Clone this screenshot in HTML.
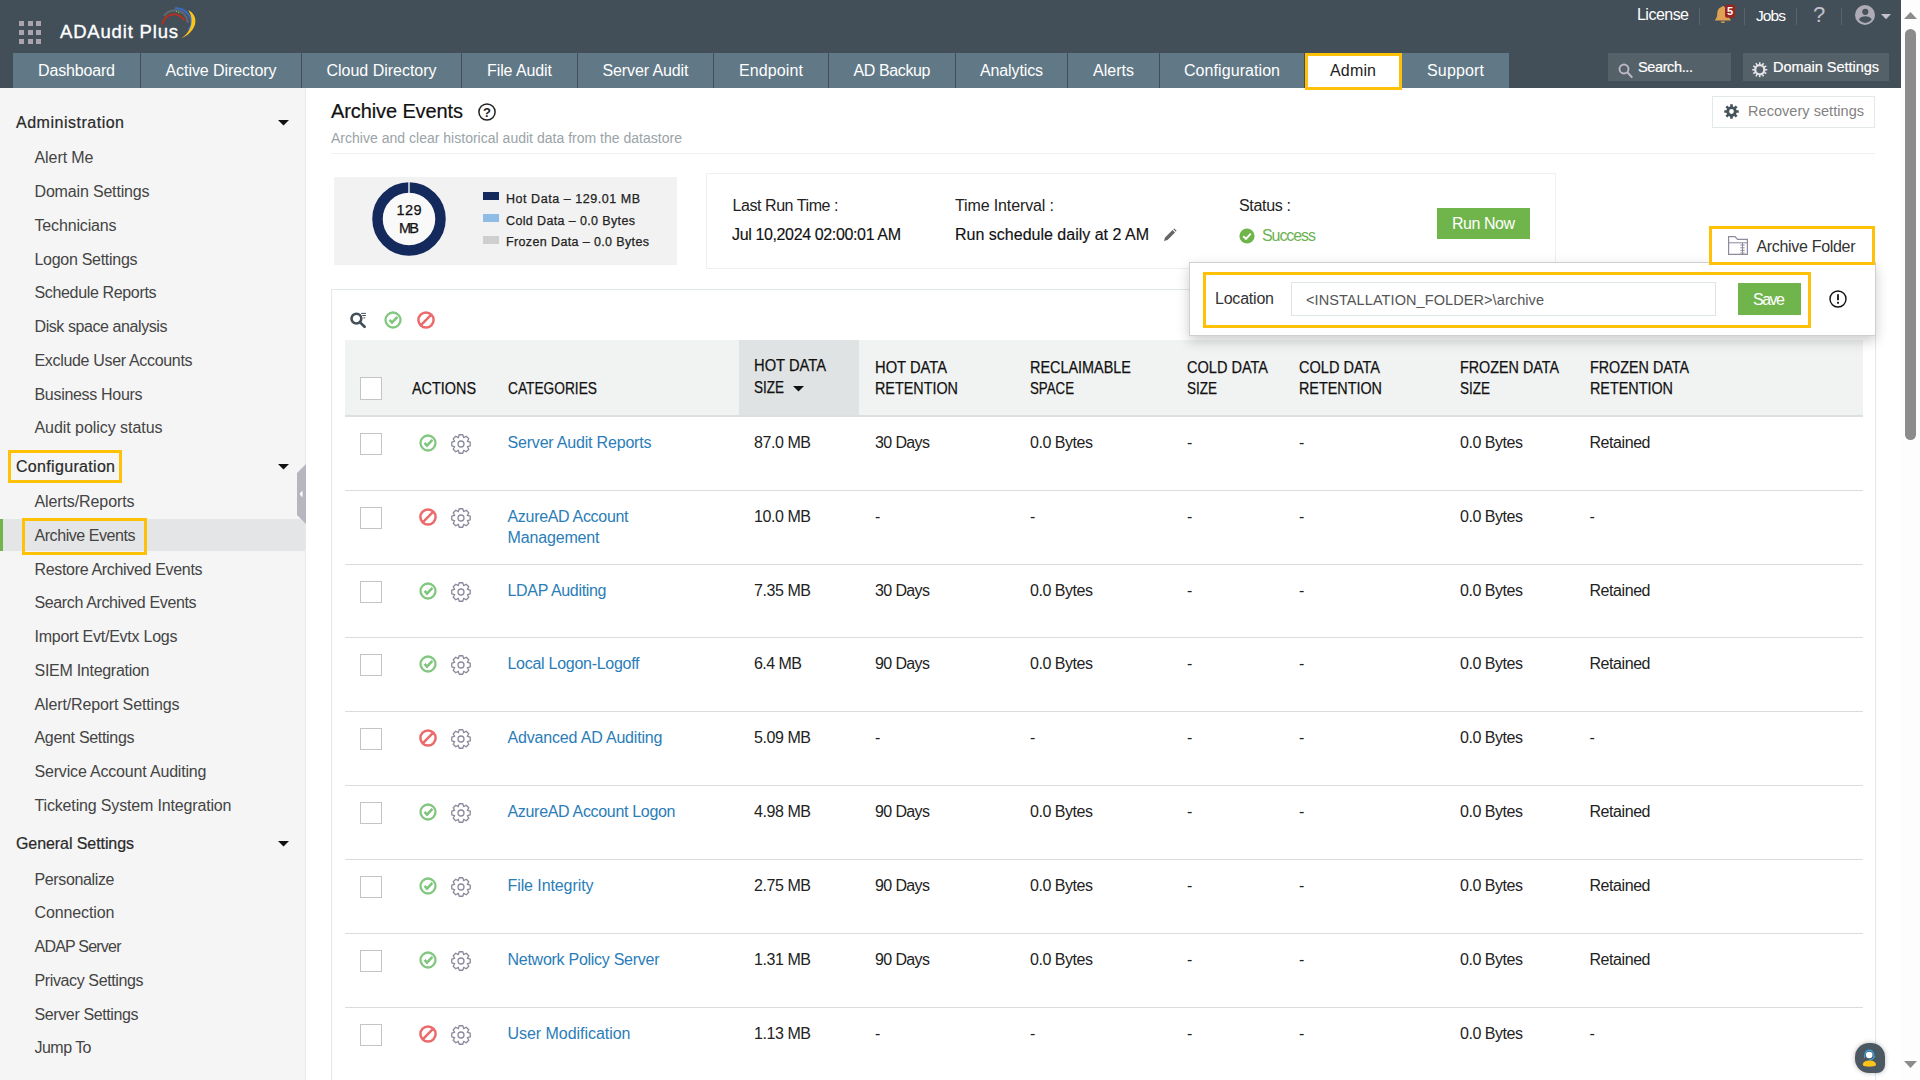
<!DOCTYPE html>
<html><head><meta charset="utf-8"><title>ADAudit Plus</title>
<style>
html,body{margin:0;padding:0;}
body{width:1920px;height:1080px;overflow:hidden;position:relative;background:#fff;font-family:"Liberation Sans",sans-serif;}
.t{position:absolute;white-space:nowrap;}
.r{position:absolute;box-sizing:border-box;}
svg{position:absolute;overflow:visible;}
</style></head><body>
<div class="r" style="left:1901px;top:0px;width:19px;height:1080px;background:#fdfdfd;"></div>
<div class="r" style="left:1905px;top:29px;width:11px;height:411px;background:#8b8b8b;border-radius:5.5px;"></div>
<svg style="left:1904px;top:12px" width="13" height="7"><path d="M0 7 L6.5 0 L13 7Z" fill="#8b8b8b"/></svg>
<svg style="left:1904px;top:1061px" width="13" height="7"><path d="M0 0 L6.5 7 L13 0Z" fill="#8b8b8b"/></svg>
<div class="r" style="left:0px;top:0px;width:1901px;height:88px;background:#424f58;"></div>
<div class="r" style="left:19px;top:21px;width:5px;height:4.6px;background:#a9a4ad;"></div>
<div class="r" style="left:19px;top:30.2px;width:5px;height:4.6px;background:#a9a4ad;"></div>
<div class="r" style="left:19px;top:39.4px;width:5px;height:4.6px;background:#a9a4ad;"></div>
<div class="r" style="left:27.5px;top:21px;width:5px;height:4.6px;background:#a9a4ad;"></div>
<div class="r" style="left:27.5px;top:30.2px;width:5px;height:4.6px;background:#a9a4ad;"></div>
<div class="r" style="left:27.5px;top:39.4px;width:5px;height:4.6px;background:#a9a4ad;"></div>
<div class="r" style="left:36px;top:21px;width:5px;height:4.6px;background:#a9a4ad;"></div>
<div class="r" style="left:36px;top:30.2px;width:5px;height:4.6px;background:#a9a4ad;"></div>
<div class="r" style="left:36px;top:39.4px;width:5px;height:4.6px;background:#a9a4ad;"></div>
<div class="t " style="left:60px;top:19.2px;font-size:18.5px;line-height:26px;color:#fff;letter-spacing:0.818px;-webkit-text-stroke:0.35px #fff;">ADAudit Plus</div>
<svg style="left:160px;top:6px" width="40" height="36" viewBox="0 0 40 36">
<path d="M3.9 9.7 C9 4 17 2.5 23 7 C26 9.5 27.5 13 27.7 16.7" fill="none" stroke="#5f6a70" stroke-width="2.2"/>
<path d="M15 2.3 C22 1.5 28 6 30.5 12 C32.5 17 31 21 28.4 23.6" fill="none" stroke="#3a6cc4" stroke-width="2"/>
<path d="M28 4 C38 8 40 24 20.8 32.7 C33 25 34 12 28 4Z" fill="#fcc419"/>
<path d="M2.3 18.5 C4 9 16 3.5 24.7 14.4" fill="none" stroke="#b5301f" stroke-width="2"/>
<circle cx="16.5" cy="5.5" r="0.6" fill="#7bd04a"/><circle cx="18.5" cy="6.6" r="0.6" fill="#7bd04a"/>
</svg>
<div class="r" style="left:13px;top:53px;width:127px;height:35px;background:#617987;"></div>
<div class="t " style="left:38px;top:60.1px;font-size:16px;line-height:22px;color:#fff;letter-spacing:-0.159px;">Dashboard</div>
<div class="r" style="left:141px;top:53px;width:160px;height:35px;background:#617987;"></div>
<div class="t " style="left:165.5px;top:60.1px;font-size:16px;line-height:22px;color:#fff;letter-spacing:-0.068px;">Active Directory</div>
<div class="r" style="left:302px;top:53px;width:159px;height:35px;background:#617987;"></div>
<div class="t " style="left:326.5px;top:60.1px;font-size:16px;line-height:22px;color:#fff;letter-spacing:-0.018px;">Cloud Directory</div>
<div class="r" style="left:462px;top:53px;width:115px;height:35px;background:#617987;"></div>
<div class="t " style="left:487px;top:60.1px;font-size:16px;line-height:22px;color:#fff;letter-spacing:-0.090px;">File Audit</div>
<div class="r" style="left:578px;top:53px;width:135px;height:35px;background:#617987;"></div>
<div class="t " style="left:602.5px;top:60.1px;font-size:16px;line-height:22px;color:#fff;letter-spacing:-0.105px;">Server Audit</div>
<div class="r" style="left:714px;top:53px;width:114px;height:35px;background:#617987;"></div>
<div class="t " style="left:739px;top:60.1px;font-size:16px;line-height:22px;color:#fff;letter-spacing:0.119px;">Endpoint</div>
<div class="r" style="left:829px;top:53px;width:126px;height:35px;background:#617987;"></div>
<div class="t " style="left:853.5px;top:60.1px;font-size:16px;line-height:22px;color:#fff;letter-spacing:-0.380px;">AD Backup</div>
<div class="r" style="left:956px;top:53px;width:111px;height:35px;background:#617987;"></div>
<div class="t " style="left:980px;top:60.1px;font-size:16px;line-height:22px;color:#fff;letter-spacing:-0.128px;">Analytics</div>
<div class="r" style="left:1068px;top:53px;width:91px;height:35px;background:#617987;"></div>
<div class="t " style="left:1093px;top:60.1px;font-size:16px;line-height:22px;color:#fff;letter-spacing:0.020px;">Alerts</div>
<div class="r" style="left:1160px;top:53px;width:144px;height:35px;background:#617987;"></div>
<div class="t " style="left:1184px;top:60.1px;font-size:16px;line-height:22px;color:#fff;letter-spacing:0.069px;">Configuration</div>
<div class="r" style="left:1304.5px;top:53px;width:97px;height:36.5px;background:#fff;border:3.5px solid #ffc107;"></div>
<div class="t " style="left:1330px;top:60.1px;font-size:16px;line-height:22px;color:#222;letter-spacing:0.162px;">Admin</div>
<div class="r" style="left:1402px;top:53px;width:107px;height:35px;background:#617987;"></div>
<div class="t " style="left:1427px;top:60.1px;font-size:16px;line-height:22px;color:#fff;letter-spacing:0.160px;">Support</div>
<div class="t " style="left:1637px;top:3.8px;font-size:16px;line-height:22px;color:#fff;letter-spacing:-0.525px;">License</div>
<div class="r" style="left:1699px;top:8px;width:1px;height:17px;background:#58646c;"></div>
<svg style="left:1714px;top:4px" width="22" height="21" viewBox="0 0 22 21">
<path d="M7.6 3 C8 1.6 10 1.6 10.4 3 C13.6 3.8 14.4 6.8 14.6 10.3 C14.8 13.2 15.6 14.6 17 16.4 L0.8 16.4 C2.2 14.6 3 13.2 3.2 10.3 C3.4 6.8 4.2 3.8 7.6 3Z" fill="#dea252"/>
<path d="M6.6 17.4 A2.4 2.4 0 0 0 11.2 17.4Z" fill="#dea252"/>
<rect x="11" y="0.7" width="10" height="13" rx="2.2" fill="#9b2320"/>
<text x="16" y="10.8" font-size="11" font-weight="bold" fill="#fff" text-anchor="middle" font-family="Liberation Sans, sans-serif">5</text>
</svg>
<div class="r" style="left:1744px;top:8px;width:1px;height:17px;background:#58646c;"></div>
<div class="t " style="left:1756px;top:5px;font-size:15.5px;line-height:22px;color:#fff;letter-spacing:-0.913px;">Jobs</div>
<div class="r" style="left:1796px;top:8px;width:1px;height:17px;background:#58646c;"></div>
<div class="t " style="left:1813px;top:-1px;font-size:22px;line-height:31px;color:#c3c0cb;">?</div>
<div class="r" style="left:1841px;top:8px;width:1px;height:17px;background:#58646c;"></div>
<svg style="left:1855px;top:5px" width="20" height="20" viewBox="0 0 20 20">
<circle cx="10" cy="10" r="10" fill="#aeabb6"/>
<circle cx="10.3" cy="6.8" r="3.1" fill="#46525c"/>
<path d="M3.9 14.6 C6 10.2 14.6 10.2 16.7 14.6 C14.8 17 12.6 17.9 10.3 17.9 C8 17.9 5.8 17 3.9 14.6Z" fill="#46525c"/>
</svg>
<svg style="left:1881px;top:13.8px" width="10" height="6"><path d="M0 0 L5 5.2 L10 0Z" fill="#c4c1cd"/></svg>
<div class="r" style="left:1608px;top:53px;width:123px;height:28px;background:#556169;"></div>
<svg style="left:1618px;top:63px" width="16" height="16" viewBox="0 0 16 16"><circle cx="6" cy="6" r="4.5" fill="none" stroke="#bcb9c4" stroke-width="1.9"/><path d="M9.3 9.3 L14.3 14.6" stroke="#bcb9c4" stroke-width="2.1" /></svg>
<div class="t " style="left:1638px;top:56.5px;font-size:14.5px;line-height:20px;color:#fff;letter-spacing:-0.379px;-webkit-text-stroke:0.20px #fff;">Search...</div>
<div class="r" style="left:1743px;top:53px;width:146px;height:28px;background:#556169;"></div>
<svg style="left:1751.8px;top:62.2px" width="15.5" height="15.5" viewBox="0 0 17 17"><circle cx="8.5" cy="8.5" r="5" fill="none" stroke="#e4e2e8" stroke-width="2.5"/><path d="M8.50 2.90 L8.50 0.20 M11.30 3.65 L12.65 1.31 M13.35 5.70 L15.69 4.35 M14.10 8.50 L16.80 8.50 M13.35 11.30 L15.69 12.65 M11.30 13.35 L12.65 15.69 M8.50 14.10 L8.50 16.80 M5.70 13.35 L4.35 15.69 M3.65 11.30 L1.31 12.65 M2.90 8.50 L0.20 8.50 M3.65 5.70 L1.31 4.35 M5.70 3.65 L4.35 1.31 " stroke="#e4e2e8" stroke-width="1.7"/></svg>
<div class="t " style="left:1773px;top:56.5px;font-size:14.5px;line-height:20px;color:#fff;letter-spacing:-0.028px;-webkit-text-stroke:0.20px #fff;">Domain Settings</div>
<div class="r" style="left:0px;top:88px;width:306px;height:992px;background:#f5f5f5;border-right:1px solid #e9e9e9;"></div>
<div class="r" style="left:0px;top:519px;width:305px;height:31.5px;background:#e4e5e6;"></div>
<div class="r" style="left:0px;top:519px;width:3px;height:31.5px;background:#70b54c;"></div>
<div class="t " style="left:16px;top:111.6px;font-size:16px;line-height:22px;color:#2a2a2a;letter-spacing:0.510px;-webkit-text-stroke:0.22px #2a2a2a;">Administration</div>
<svg style="left:278px;top:119.5px" width="11" height="6"><path d="M0 0 L5.5 5.5 L11 0Z" fill="#111"/></svg>
<div class="t " style="left:16px;top:455.6px;font-size:16px;line-height:22px;color:#2a2a2a;letter-spacing:0.319px;-webkit-text-stroke:0.22px #2a2a2a;">Configuration</div>
<svg style="left:278px;top:463.5px" width="11" height="6"><path d="M0 0 L5.5 5.5 L11 0Z" fill="#111"/></svg>
<div class="t " style="left:16px;top:832.6px;font-size:16px;line-height:22px;color:#2a2a2a;letter-spacing:-0.079px;-webkit-text-stroke:0.22px #2a2a2a;">General Settings</div>
<svg style="left:278px;top:840.5px" width="11" height="6"><path d="M0 0 L5.5 5.5 L11 0Z" fill="#111"/></svg>
<div class="t " style="left:34.5px;top:146.6px;font-size:16px;line-height:22px;color:#444;letter-spacing:-0.081px;">Alert Me</div>
<div class="t " style="left:34.5px;top:180.6px;font-size:16px;line-height:22px;color:#444;letter-spacing:-0.171px;">Domain Settings</div>
<div class="t " style="left:34.5px;top:214.6px;font-size:16px;line-height:22px;color:#444;letter-spacing:-0.160px;">Technicians</div>
<div class="t " style="left:34.5px;top:248.6px;font-size:16px;line-height:22px;color:#444;letter-spacing:-0.288px;">Logon Settings</div>
<div class="t " style="left:34.5px;top:281.6px;font-size:16px;line-height:22px;color:#444;letter-spacing:-0.346px;">Schedule Reports</div>
<div class="t " style="left:34.5px;top:315.6px;font-size:16px;line-height:22px;color:#444;letter-spacing:-0.417px;">Disk space analysis</div>
<div class="t " style="left:34.5px;top:349.6px;font-size:16px;line-height:22px;color:#444;letter-spacing:-0.326px;">Exclude User Accounts</div>
<div class="t " style="left:34.5px;top:383.6px;font-size:16px;line-height:22px;color:#444;letter-spacing:-0.311px;">Business Hours</div>
<div class="t " style="left:34.5px;top:416.6px;font-size:16px;line-height:22px;color:#444;letter-spacing:-0.053px;">Audit policy status</div>
<div class="t " style="left:34.5px;top:490.6px;font-size:16px;line-height:22px;color:#444;letter-spacing:-0.105px;">Alerts/Reports</div>
<div class="t " style="left:34.5px;top:524.6px;font-size:16px;line-height:22px;color:#444;letter-spacing:-0.439px;">Archive Events</div>
<div class="t " style="left:34.5px;top:558.6px;font-size:16px;line-height:22px;color:#444;letter-spacing:-0.327px;">Restore Archived Events</div>
<div class="t " style="left:34.5px;top:591.6px;font-size:16px;line-height:22px;color:#444;letter-spacing:-0.375px;">Search Archived Events</div>
<div class="t " style="left:34.5px;top:625.6px;font-size:16px;line-height:22px;color:#444;letter-spacing:-0.243px;">Import Evt/Evtx Logs</div>
<div class="t " style="left:34.5px;top:659.6px;font-size:16px;line-height:22px;color:#444;letter-spacing:-0.278px;">SIEM Integration</div>
<div class="t " style="left:34.5px;top:693.6px;font-size:16px;line-height:22px;color:#444;letter-spacing:-0.131px;">Alert/Report Settings</div>
<div class="t " style="left:34.5px;top:726.6px;font-size:16px;line-height:22px;color:#444;letter-spacing:-0.313px;">Agent Settings</div>
<div class="t " style="left:34.5px;top:760.6px;font-size:16px;line-height:22px;color:#444;letter-spacing:-0.179px;">Service Account Auditing</div>
<div class="t " style="left:34.5px;top:794.6px;font-size:16px;line-height:22px;color:#444;letter-spacing:-0.158px;">Ticketing System Integration</div>
<div class="t " style="left:34.5px;top:868.6px;font-size:16px;line-height:22px;color:#444;letter-spacing:-0.360px;">Personalize</div>
<div class="t " style="left:34.5px;top:901.6px;font-size:16px;line-height:22px;color:#444;letter-spacing:-0.105px;">Connection</div>
<div class="t " style="left:34.5px;top:935.6px;font-size:16px;line-height:22px;color:#444;letter-spacing:-0.785px;">ADAP Server</div>
<div class="t " style="left:34.5px;top:969.6px;font-size:16px;line-height:22px;color:#444;letter-spacing:-0.381px;">Privacy Settings</div>
<div class="t " style="left:34.5px;top:1003.6px;font-size:16px;line-height:22px;color:#444;letter-spacing:-0.384px;">Server Settings</div>
<div class="t " style="left:34.5px;top:1036.6px;font-size:16px;line-height:22px;color:#444;letter-spacing:-0.530px;">Jump To</div>
<div class="r" style="left:8px;top:450.3px;width:113.5px;height:32.3px;border:3.7px solid #ffc107;"></div>
<div class="r" style="left:21.8px;top:518px;width:125px;height:37px;border:3.7px solid #ffc107;"></div>
<svg style="left:296px;top:464px" width="10" height="60"><path d="M10 0 L1 9 V51 L10 60Z" fill="#b8b5c0"/><path d="M6.5 26.5 L3.5 30 L6.5 33.5Z" fill="#fff"/></svg>
<div class="t " style="left:331px;top:97px;font-size:20px;line-height:28px;color:#111;letter-spacing:-0.107px;-webkit-text-stroke:0.20px #111;">Archive Events</div>
<svg style="left:478.2px;top:103px" width="18" height="18" viewBox="0 0 18 18"><circle cx="9" cy="9" r="8.1" fill="none" stroke="#222" stroke-width="1.5"/>
<text x="9" y="13.6" font-size="13" font-weight="bold" fill="#222" text-anchor="middle" font-family="Liberation Sans, sans-serif">?</text></svg>
<div class="t " style="left:331px;top:128px;font-size:14px;line-height:20px;color:#9aa3a8;letter-spacing:0.014px;">Archive and clear historical audit data from the datastore</div>
<div class="r" style="left:331px;top:153px;width:1544px;height:1px;background:#eef1f1;"></div>
<div class="r" style="left:1712px;top:96px;width:163px;height:32px;background:#fff;border:1px solid #e3e8e8;"></div>
<svg style="left:1724px;top:104px" width="15" height="15" viewBox="0 0 17 17">
<circle cx="8.5" cy="8.5" r="4.3" fill="none" stroke="#47535b" stroke-width="3.2"/>
<g stroke="#47535b" stroke-width="3">
<path d="M8.5 0.3 V3.4 M8.5 13.6 V16.7 M0.3 8.5 H3.4 M13.6 8.5 H16.7 M2.7 2.7 L4.9 4.9 M12.1 12.1 L14.3 14.3 M2.7 14.3 L4.9 12.1 M12.1 4.9 L14.3 2.7"/>
</g></svg>
<div class="t " style="left:1748px;top:101px;font-size:14.5px;line-height:20px;color:#828282;letter-spacing:0.047px;">Recovery settings</div>
<div class="r" style="left:334px;top:177px;width:342.5px;height:88px;background:#f2f2f2;"></div>
<svg style="left:372px;top:182px" width="74" height="74" viewBox="0 0 74 74">
<circle cx="37" cy="37" r="31.5" fill="#f9f9f9" stroke="#142a5c" stroke-width="10.5"/>
<rect x="36.3" y="0" width="1.4" height="11" fill="#f4f5f8"/>
</svg>
<div class="t " style="left:396.5px;top:200.3px;font-size:14.5px;line-height:20px;color:#111;letter-spacing:0.403px;-webkit-text-stroke:0.25px #111;">129</div>
<div class="t " style="left:399px;top:218.3px;font-size:14.5px;line-height:20px;color:#111;letter-spacing:-1.751px;-webkit-text-stroke:0.25px #111;">MB</div>
<div class="r" style="left:483px;top:192px;width:16px;height:8px;background:#142a5c;"></div>
<div class="t " style="left:506px;top:189.7px;font-size:12.5px;line-height:18px;color:#222;letter-spacing:0.543px;-webkit-text-stroke:0.25px #222;">Hot Data – 129.01 MB</div>
<div class="r" style="left:483px;top:214px;width:16px;height:8px;background:#8fbce6;"></div>
<div class="t " style="left:506px;top:211.7px;font-size:12.5px;line-height:18px;color:#222;letter-spacing:0.370px;-webkit-text-stroke:0.25px #222;">Cold Data – 0.0 Bytes</div>
<div class="r" style="left:483px;top:236px;width:16px;height:8px;background:#cfcfcf;"></div>
<div class="t " style="left:506px;top:232.7px;font-size:12.5px;line-height:18px;color:#222;letter-spacing:0.373px;-webkit-text-stroke:0.25px #222;">Frozen Data – 0.0 Bytes</div>
<div class="r" style="left:706px;top:173px;width:850px;height:96px;background:#fff;border:1px solid #eef0f0;"></div>
<div class="t " style="left:732.5px;top:195.1px;font-size:16px;line-height:22px;color:#222;letter-spacing:-0.432px;">Last Run Time :</div>
<div class="t " style="left:732px;top:224.1px;font-size:16px;line-height:22px;color:#111;letter-spacing:-0.365px;-webkit-text-stroke:0.15px #111;">Jul 10,2024 02:00:01 AM</div>
<div class="t " style="left:955px;top:195.1px;font-size:16px;line-height:22px;color:#222;letter-spacing:-0.126px;">Time Interval :</div>
<div class="t " style="left:955px;top:224.1px;font-size:16px;line-height:22px;color:#111;letter-spacing:0.004px;-webkit-text-stroke:0.15px #111;">Run schedule daily at 2 AM</div>
<svg style="left:1163px;top:228px" width="14" height="14" viewBox="0 0 14 14"><path d="M1 13 L2 9.5 L9.5 2 L12 4.5 L4.5 12Z M10.3 1.2 L11.3 0.4 L13.6 2.7 L12.8 3.7Z" fill="#666"/></svg>
<div class="t " style="left:1239px;top:195.1px;font-size:16px;line-height:22px;color:#222;letter-spacing:-0.321px;">Status :</div>
<svg style="left:1238.8px;top:227.6px" width="16" height="16" viewBox="0 0 16 16"><circle cx="8" cy="8" r="7.6" fill="#70b54c"/><path d="M4.2 8.2 L7 10.8 L11.8 5.6" fill="none" stroke="#fff" stroke-width="1.9"/></svg>
<div class="t " style="left:1262px;top:224.6px;font-size:16px;line-height:22px;color:#6cb14f;letter-spacing:-1.078px;">Success</div>
<div class="r" style="left:1437px;top:208px;width:93px;height:31px;background:#70b54c;"></div>
<div class="t " style="left:1452px;top:212.6px;font-size:16px;line-height:22px;color:#fff;letter-spacing:-0.467px;">Run Now</div>
<div class="r" style="left:331px;top:289px;width:1545px;height:800px;background:#fff;border:1px solid #e1e8e8;"></div>
<svg style="left:349px;top:311px" width="18" height="18" viewBox="0 0 18 18"><circle cx="7.4" cy="7.6" r="4.9" fill="none" stroke="#434f58" stroke-width="2.6"/><path d="M10.8 11.1 L15.6 15.8" stroke="#434f58" stroke-width="2.7" stroke-linecap="round"/><path d="M12.2 2.4 H16.9 M13.3 4.5 H16.9 M14.4 6.9 H16.2" stroke="#434f58" stroke-width="1"/></svg>
<svg style="left:383.3px;top:309.9px" width="20" height="20" viewBox="0 0 20 20"><circle cx="10" cy="10" r="7.5" fill="none" stroke="#82c77f" stroke-width="2.3"/><path d="M6.6 9.9 L9 12.6 L14.4 6.8" fill="none" stroke="#7cc57a" stroke-width="2.5"/></svg>
<svg style="left:416.1px;top:309.9px" width="20" height="20" viewBox="0 0 20 20"><circle cx="10" cy="10" r="7.6" fill="none" stroke="#eb6a6b" stroke-width="2.5"/><path d="M4.7 15.3 L15.3 4.7" stroke="#eb6a6b" stroke-width="2.5"/></svg>
<div class="r" style="left:345px;top:340px;width:1518px;height:75px;background:#f1f3f3;"></div>
<div class="r" style="left:739px;top:340px;width:120px;height:75px;background:#dfe3e4;"></div>
<div class="r" style="left:345px;top:415px;width:1518px;height:2px;background:#dde0e0;"></div>
<div class="r" style="left:360px;top:377px;width:22px;height:23px;background:#fff;border:1px solid #c4c4c4;"></div>
<div class="t " style="left:412px;top:377.1px;font-size:16.5px;line-height:23px;color:#111;transform-origin:0 50%;transform:scaleX(0.8726);-webkit-text-stroke:0.25px #111;">ACTIONS</div>
<div class="t " style="left:507.5px;top:377.1px;font-size:16.5px;line-height:23px;color:#111;transform-origin:0 50%;transform:scaleX(0.8321);-webkit-text-stroke:0.25px #111;">CATEGORIES</div>
<div class="t " style="left:754px;top:353.6px;font-size:16.5px;line-height:23px;color:#111;transform-origin:0 50%;transform:scaleX(0.8925);-webkit-text-stroke:0.25px #111;">HOT DATA</div>
<div class="t " style="left:754px;top:375.9px;font-size:16.5px;line-height:23px;color:#111;transform-origin:0 50%;transform:scaleX(0.8180);-webkit-text-stroke:0.25px #111;">SIZE</div>
<svg style="left:793px;top:386px" width="11" height="6"><path d="M0 0 L5.5 5.5 L11 0Z" fill="#111"/></svg>
<div class="t " style="left:875px;top:355.6px;font-size:16.5px;line-height:23px;color:#111;transform-origin:0 50%;transform:scaleX(0.8925);-webkit-text-stroke:0.25px #111;">HOT DATA</div>
<div class="t " style="left:875px;top:377.1px;font-size:16.5px;line-height:23px;color:#111;transform-origin:0 50%;transform:scaleX(0.8706);-webkit-text-stroke:0.25px #111;">RETENTION</div>
<div class="t " style="left:1030px;top:355.6px;font-size:16.5px;line-height:23px;color:#111;transform-origin:0 50%;transform:scaleX(0.8741);-webkit-text-stroke:0.25px #111;">RECLAIMABLE</div>
<div class="t " style="left:1030px;top:377.1px;font-size:16.5px;line-height:23px;color:#111;transform-origin:0 50%;transform:scaleX(0.8042);-webkit-text-stroke:0.25px #111;">SPACE</div>
<div class="t " style="left:1187px;top:355.6px;font-size:16.5px;line-height:23px;color:#111;transform-origin:0 50%;transform:scaleX(0.8806);-webkit-text-stroke:0.25px #111;">COLD DATA</div>
<div class="t " style="left:1187px;top:377.1px;font-size:16.5px;line-height:23px;color:#111;transform-origin:0 50%;transform:scaleX(0.8180);-webkit-text-stroke:0.25px #111;">SIZE</div>
<div class="t " style="left:1299px;top:355.6px;font-size:16.5px;line-height:23px;color:#111;transform-origin:0 50%;transform:scaleX(0.8806);-webkit-text-stroke:0.25px #111;">COLD DATA</div>
<div class="t " style="left:1299px;top:377.1px;font-size:16.5px;line-height:23px;color:#111;transform-origin:0 50%;transform:scaleX(0.8706);-webkit-text-stroke:0.25px #111;">RETENTION</div>
<div class="t " style="left:1460px;top:355.6px;font-size:16.5px;line-height:23px;color:#111;transform-origin:0 50%;transform:scaleX(0.8686);-webkit-text-stroke:0.25px #111;">FROZEN DATA</div>
<div class="t " style="left:1460px;top:377.1px;font-size:16.5px;line-height:23px;color:#111;transform-origin:0 50%;transform:scaleX(0.8180);-webkit-text-stroke:0.25px #111;">SIZE</div>
<div class="t " style="left:1589.5px;top:355.6px;font-size:16.5px;line-height:23px;color:#111;transform-origin:0 50%;transform:scaleX(0.8686);-webkit-text-stroke:0.25px #111;">FROZEN DATA</div>
<div class="t " style="left:1589.5px;top:377.1px;font-size:16.5px;line-height:23px;color:#111;transform-origin:0 50%;transform:scaleX(0.8706);-webkit-text-stroke:0.25px #111;">RETENTION</div>
<div class="r" style="left:345px;top:490px;width:1518px;height:1px;background:#dcdcdc;"></div>
<div class="r" style="left:345px;top:564px;width:1518px;height:1px;background:#dcdcdc;"></div>
<div class="r" style="left:345px;top:637px;width:1518px;height:1px;background:#dcdcdc;"></div>
<div class="r" style="left:345px;top:711px;width:1518px;height:1px;background:#dcdcdc;"></div>
<div class="r" style="left:345px;top:785px;width:1518px;height:1px;background:#dcdcdc;"></div>
<div class="r" style="left:345px;top:859px;width:1518px;height:1px;background:#dcdcdc;"></div>
<div class="r" style="left:345px;top:933px;width:1518px;height:1px;background:#dcdcdc;"></div>
<div class="r" style="left:345px;top:1007px;width:1518px;height:1px;background:#dcdcdc;"></div>
<div class="r" style="left:360px;top:433px;width:22px;height:22px;background:#fff;border:1px solid #c4c4c4;"></div>
<svg style="left:418.2px;top:432.9px" width="20" height="20" viewBox="0 0 20 20"><circle cx="10" cy="10" r="7.5" fill="none" stroke="#82c77f" stroke-width="2.3"/><path d="M6.6 9.9 L9 12.6 L14.4 6.8" fill="none" stroke="#7cc57a" stroke-width="2.5"/></svg>
<svg style="left:450.6px;top:434px" width="20" height="20" viewBox="0 0 20 20"><path d="M8.22 0.77 L11.78 0.77 L12.69 3.64 L12.59 3.61 L15.27 2.22 L17.78 4.73 L16.39 7.41 L16.35 7.31 L19.23 8.22 L19.23 11.78 L16.36 12.69 L16.39 12.59 L17.78 15.27 L15.27 17.78 L12.59 16.39 L12.69 16.35 L11.78 19.23 L8.22 19.23 L7.31 16.36 L7.41 16.39 L4.73 17.78 L2.22 15.27 L3.61 12.59 L3.65 12.69 L0.77 11.78 L0.77 8.22 L3.64 7.31 L3.61 7.41 L2.22 4.73 L4.73 2.22 L7.41 3.61 L7.31 3.65Z" fill="none" stroke="#8a8a9d" stroke-width="1.3" stroke-linejoin="round"/><circle cx="10" cy="10" r="3.0" fill="none" stroke="#8a8a9d" stroke-width="1.3"/></svg>
<div class="t " style="left:507.5px;top:432.1px;font-size:16px;line-height:22px;color:#2a7db8;letter-spacing:-0.191px;">Server Audit Reports</div>
<div class="t " style="left:754px;top:432.1px;font-size:16px;line-height:22px;color:#222;letter-spacing:-0.431px;">87.0 MB</div>
<div class="t " style="left:875px;top:432.1px;font-size:16px;line-height:22px;color:#222;letter-spacing:-0.616px;">30 Days</div>
<div class="t " style="left:1030px;top:432.1px;font-size:16px;line-height:22px;color:#222;letter-spacing:-0.463px;">0.0 Bytes</div>
<div class="t " style="left:1589.5px;top:432.1px;font-size:16px;line-height:22px;color:#222;letter-spacing:-0.435px;">Retained</div>
<div class="t " style="left:1187px;top:432.1px;font-size:16px;line-height:22px;color:#222;">-</div>
<div class="t " style="left:1299px;top:432.1px;font-size:16px;line-height:22px;color:#222;">-</div>
<div class="t " style="left:1460px;top:432.1px;font-size:16px;line-height:22px;color:#222;letter-spacing:-0.463px;">0.0 Bytes</div>
<div class="r" style="left:360px;top:507px;width:22px;height:22px;background:#fff;border:1px solid #c4c4c4;"></div>
<svg style="left:418.4px;top:506.9px" width="20" height="20" viewBox="0 0 20 20"><circle cx="10" cy="10" r="7.6" fill="none" stroke="#eb6a6b" stroke-width="2.5"/><path d="M4.7 15.3 L15.3 4.7" stroke="#eb6a6b" stroke-width="2.5"/></svg>
<svg style="left:450.6px;top:508px" width="20" height="20" viewBox="0 0 20 20"><path d="M8.22 0.77 L11.78 0.77 L12.69 3.64 L12.59 3.61 L15.27 2.22 L17.78 4.73 L16.39 7.41 L16.35 7.31 L19.23 8.22 L19.23 11.78 L16.36 12.69 L16.39 12.59 L17.78 15.27 L15.27 17.78 L12.59 16.39 L12.69 16.35 L11.78 19.23 L8.22 19.23 L7.31 16.36 L7.41 16.39 L4.73 17.78 L2.22 15.27 L3.61 12.59 L3.65 12.69 L0.77 11.78 L0.77 8.22 L3.64 7.31 L3.61 7.41 L2.22 4.73 L4.73 2.22 L7.41 3.61 L7.31 3.65Z" fill="none" stroke="#8a8a9d" stroke-width="1.3" stroke-linejoin="round"/><circle cx="10" cy="10" r="3.0" fill="none" stroke="#8a8a9d" stroke-width="1.3"/></svg>
<div class="t " style="left:507.5px;top:506.1px;font-size:16px;line-height:22px;color:#2a7db8;letter-spacing:-0.314px;">AzureAD Account</div>
<div class="t " style="left:507.5px;top:527.1px;font-size:16px;line-height:22px;color:#2a7db8;letter-spacing:-0.155px;">Management</div>
<div class="t " style="left:754px;top:506.1px;font-size:16px;line-height:22px;color:#222;letter-spacing:-0.431px;">10.0 MB</div>
<div class="t " style="left:875px;top:506.1px;font-size:16px;line-height:22px;color:#222;">-</div>
<div class="t " style="left:1030px;top:506.1px;font-size:16px;line-height:22px;color:#222;">-</div>
<div class="t " style="left:1589.5px;top:506.1px;font-size:16px;line-height:22px;color:#222;">-</div>
<div class="t " style="left:1187px;top:506.1px;font-size:16px;line-height:22px;color:#222;">-</div>
<div class="t " style="left:1299px;top:506.1px;font-size:16px;line-height:22px;color:#222;">-</div>
<div class="t " style="left:1460px;top:506.1px;font-size:16px;line-height:22px;color:#222;letter-spacing:-0.463px;">0.0 Bytes</div>
<div class="r" style="left:360px;top:581px;width:22px;height:22px;background:#fff;border:1px solid #c4c4c4;"></div>
<svg style="left:418.2px;top:580.9px" width="20" height="20" viewBox="0 0 20 20"><circle cx="10" cy="10" r="7.5" fill="none" stroke="#82c77f" stroke-width="2.3"/><path d="M6.6 9.9 L9 12.6 L14.4 6.8" fill="none" stroke="#7cc57a" stroke-width="2.5"/></svg>
<svg style="left:450.6px;top:582px" width="20" height="20" viewBox="0 0 20 20"><path d="M8.22 0.77 L11.78 0.77 L12.69 3.64 L12.59 3.61 L15.27 2.22 L17.78 4.73 L16.39 7.41 L16.35 7.31 L19.23 8.22 L19.23 11.78 L16.36 12.69 L16.39 12.59 L17.78 15.27 L15.27 17.78 L12.59 16.39 L12.69 16.35 L11.78 19.23 L8.22 19.23 L7.31 16.36 L7.41 16.39 L4.73 17.78 L2.22 15.27 L3.61 12.59 L3.65 12.69 L0.77 11.78 L0.77 8.22 L3.64 7.31 L3.61 7.41 L2.22 4.73 L4.73 2.22 L7.41 3.61 L7.31 3.65Z" fill="none" stroke="#8a8a9d" stroke-width="1.3" stroke-linejoin="round"/><circle cx="10" cy="10" r="3.0" fill="none" stroke="#8a8a9d" stroke-width="1.3"/></svg>
<div class="t " style="left:507.5px;top:580.1px;font-size:16px;line-height:22px;color:#2a7db8;letter-spacing:-0.324px;">LDAP Auditing</div>
<div class="t " style="left:754px;top:580.1px;font-size:16px;line-height:22px;color:#222;letter-spacing:-0.431px;">7.35 MB</div>
<div class="t " style="left:875px;top:580.1px;font-size:16px;line-height:22px;color:#222;letter-spacing:-0.616px;">30 Days</div>
<div class="t " style="left:1030px;top:580.1px;font-size:16px;line-height:22px;color:#222;letter-spacing:-0.463px;">0.0 Bytes</div>
<div class="t " style="left:1589.5px;top:580.1px;font-size:16px;line-height:22px;color:#222;letter-spacing:-0.435px;">Retained</div>
<div class="t " style="left:1187px;top:580.1px;font-size:16px;line-height:22px;color:#222;">-</div>
<div class="t " style="left:1299px;top:580.1px;font-size:16px;line-height:22px;color:#222;">-</div>
<div class="t " style="left:1460px;top:580.1px;font-size:16px;line-height:22px;color:#222;letter-spacing:-0.463px;">0.0 Bytes</div>
<div class="r" style="left:360px;top:654px;width:22px;height:22px;background:#fff;border:1px solid #c4c4c4;"></div>
<svg style="left:418.2px;top:653.9px" width="20" height="20" viewBox="0 0 20 20"><circle cx="10" cy="10" r="7.5" fill="none" stroke="#82c77f" stroke-width="2.3"/><path d="M6.6 9.9 L9 12.6 L14.4 6.8" fill="none" stroke="#7cc57a" stroke-width="2.5"/></svg>
<svg style="left:450.6px;top:655px" width="20" height="20" viewBox="0 0 20 20"><path d="M8.22 0.77 L11.78 0.77 L12.69 3.64 L12.59 3.61 L15.27 2.22 L17.78 4.73 L16.39 7.41 L16.35 7.31 L19.23 8.22 L19.23 11.78 L16.36 12.69 L16.39 12.59 L17.78 15.27 L15.27 17.78 L12.59 16.39 L12.69 16.35 L11.78 19.23 L8.22 19.23 L7.31 16.36 L7.41 16.39 L4.73 17.78 L2.22 15.27 L3.61 12.59 L3.65 12.69 L0.77 11.78 L0.77 8.22 L3.64 7.31 L3.61 7.41 L2.22 4.73 L4.73 2.22 L7.41 3.61 L7.31 3.65Z" fill="none" stroke="#8a8a9d" stroke-width="1.3" stroke-linejoin="round"/><circle cx="10" cy="10" r="3.0" fill="none" stroke="#8a8a9d" stroke-width="1.3"/></svg>
<div class="t " style="left:507.5px;top:653.1px;font-size:16px;line-height:22px;color:#2a7db8;letter-spacing:-0.277px;">Local Logon-Logoff</div>
<div class="t " style="left:754px;top:653.1px;font-size:16px;line-height:22px;color:#222;letter-spacing:-0.537px;">6.4 MB</div>
<div class="t " style="left:875px;top:653.1px;font-size:16px;line-height:22px;color:#222;letter-spacing:-0.616px;">90 Days</div>
<div class="t " style="left:1030px;top:653.1px;font-size:16px;line-height:22px;color:#222;letter-spacing:-0.463px;">0.0 Bytes</div>
<div class="t " style="left:1589.5px;top:653.1px;font-size:16px;line-height:22px;color:#222;letter-spacing:-0.435px;">Retained</div>
<div class="t " style="left:1187px;top:653.1px;font-size:16px;line-height:22px;color:#222;">-</div>
<div class="t " style="left:1299px;top:653.1px;font-size:16px;line-height:22px;color:#222;">-</div>
<div class="t " style="left:1460px;top:653.1px;font-size:16px;line-height:22px;color:#222;letter-spacing:-0.463px;">0.0 Bytes</div>
<div class="r" style="left:360px;top:728px;width:22px;height:22px;background:#fff;border:1px solid #c4c4c4;"></div>
<svg style="left:418.4px;top:727.9px" width="20" height="20" viewBox="0 0 20 20"><circle cx="10" cy="10" r="7.6" fill="none" stroke="#eb6a6b" stroke-width="2.5"/><path d="M4.7 15.3 L15.3 4.7" stroke="#eb6a6b" stroke-width="2.5"/></svg>
<svg style="left:450.6px;top:729px" width="20" height="20" viewBox="0 0 20 20"><path d="M8.22 0.77 L11.78 0.77 L12.69 3.64 L12.59 3.61 L15.27 2.22 L17.78 4.73 L16.39 7.41 L16.35 7.31 L19.23 8.22 L19.23 11.78 L16.36 12.69 L16.39 12.59 L17.78 15.27 L15.27 17.78 L12.59 16.39 L12.69 16.35 L11.78 19.23 L8.22 19.23 L7.31 16.36 L7.41 16.39 L4.73 17.78 L2.22 15.27 L3.61 12.59 L3.65 12.69 L0.77 11.78 L0.77 8.22 L3.64 7.31 L3.61 7.41 L2.22 4.73 L4.73 2.22 L7.41 3.61 L7.31 3.65Z" fill="none" stroke="#8a8a9d" stroke-width="1.3" stroke-linejoin="round"/><circle cx="10" cy="10" r="3.0" fill="none" stroke="#8a8a9d" stroke-width="1.3"/></svg>
<div class="t " style="left:507.5px;top:727.1px;font-size:16px;line-height:22px;color:#2a7db8;letter-spacing:-0.176px;">Advanced AD Auditing</div>
<div class="t " style="left:754px;top:727.1px;font-size:16px;line-height:22px;color:#222;letter-spacing:-0.431px;">5.09 MB</div>
<div class="t " style="left:875px;top:727.1px;font-size:16px;line-height:22px;color:#222;">-</div>
<div class="t " style="left:1030px;top:727.1px;font-size:16px;line-height:22px;color:#222;">-</div>
<div class="t " style="left:1589.5px;top:727.1px;font-size:16px;line-height:22px;color:#222;">-</div>
<div class="t " style="left:1187px;top:727.1px;font-size:16px;line-height:22px;color:#222;">-</div>
<div class="t " style="left:1299px;top:727.1px;font-size:16px;line-height:22px;color:#222;">-</div>
<div class="t " style="left:1460px;top:727.1px;font-size:16px;line-height:22px;color:#222;letter-spacing:-0.463px;">0.0 Bytes</div>
<div class="r" style="left:360px;top:802px;width:22px;height:22px;background:#fff;border:1px solid #c4c4c4;"></div>
<svg style="left:418.2px;top:801.9px" width="20" height="20" viewBox="0 0 20 20"><circle cx="10" cy="10" r="7.5" fill="none" stroke="#82c77f" stroke-width="2.3"/><path d="M6.6 9.9 L9 12.6 L14.4 6.8" fill="none" stroke="#7cc57a" stroke-width="2.5"/></svg>
<svg style="left:450.6px;top:803px" width="20" height="20" viewBox="0 0 20 20"><path d="M8.22 0.77 L11.78 0.77 L12.69 3.64 L12.59 3.61 L15.27 2.22 L17.78 4.73 L16.39 7.41 L16.35 7.31 L19.23 8.22 L19.23 11.78 L16.36 12.69 L16.39 12.59 L17.78 15.27 L15.27 17.78 L12.59 16.39 L12.69 16.35 L11.78 19.23 L8.22 19.23 L7.31 16.36 L7.41 16.39 L4.73 17.78 L2.22 15.27 L3.61 12.59 L3.65 12.69 L0.77 11.78 L0.77 8.22 L3.64 7.31 L3.61 7.41 L2.22 4.73 L4.73 2.22 L7.41 3.61 L7.31 3.65Z" fill="none" stroke="#8a8a9d" stroke-width="1.3" stroke-linejoin="round"/><circle cx="10" cy="10" r="3.0" fill="none" stroke="#8a8a9d" stroke-width="1.3"/></svg>
<div class="t " style="left:507.5px;top:801.1px;font-size:16px;line-height:22px;color:#2a7db8;letter-spacing:-0.317px;">AzureAD Account Logon</div>
<div class="t " style="left:754px;top:801.1px;font-size:16px;line-height:22px;color:#222;letter-spacing:-0.431px;">4.98 MB</div>
<div class="t " style="left:875px;top:801.1px;font-size:16px;line-height:22px;color:#222;letter-spacing:-0.616px;">90 Days</div>
<div class="t " style="left:1030px;top:801.1px;font-size:16px;line-height:22px;color:#222;letter-spacing:-0.463px;">0.0 Bytes</div>
<div class="t " style="left:1589.5px;top:801.1px;font-size:16px;line-height:22px;color:#222;letter-spacing:-0.435px;">Retained</div>
<div class="t " style="left:1187px;top:801.1px;font-size:16px;line-height:22px;color:#222;">-</div>
<div class="t " style="left:1299px;top:801.1px;font-size:16px;line-height:22px;color:#222;">-</div>
<div class="t " style="left:1460px;top:801.1px;font-size:16px;line-height:22px;color:#222;letter-spacing:-0.463px;">0.0 Bytes</div>
<div class="r" style="left:360px;top:876px;width:22px;height:22px;background:#fff;border:1px solid #c4c4c4;"></div>
<svg style="left:418.2px;top:875.9px" width="20" height="20" viewBox="0 0 20 20"><circle cx="10" cy="10" r="7.5" fill="none" stroke="#82c77f" stroke-width="2.3"/><path d="M6.6 9.9 L9 12.6 L14.4 6.8" fill="none" stroke="#7cc57a" stroke-width="2.5"/></svg>
<svg style="left:450.6px;top:877px" width="20" height="20" viewBox="0 0 20 20"><path d="M8.22 0.77 L11.78 0.77 L12.69 3.64 L12.59 3.61 L15.27 2.22 L17.78 4.73 L16.39 7.41 L16.35 7.31 L19.23 8.22 L19.23 11.78 L16.36 12.69 L16.39 12.59 L17.78 15.27 L15.27 17.78 L12.59 16.39 L12.69 16.35 L11.78 19.23 L8.22 19.23 L7.31 16.36 L7.41 16.39 L4.73 17.78 L2.22 15.27 L3.61 12.59 L3.65 12.69 L0.77 11.78 L0.77 8.22 L3.64 7.31 L3.61 7.41 L2.22 4.73 L4.73 2.22 L7.41 3.61 L7.31 3.65Z" fill="none" stroke="#8a8a9d" stroke-width="1.3" stroke-linejoin="round"/><circle cx="10" cy="10" r="3.0" fill="none" stroke="#8a8a9d" stroke-width="1.3"/></svg>
<div class="t " style="left:507.5px;top:875.1px;font-size:16px;line-height:22px;color:#2a7db8;letter-spacing:-0.088px;">File Integrity</div>
<div class="t " style="left:754px;top:875.1px;font-size:16px;line-height:22px;color:#222;letter-spacing:-0.431px;">2.75 MB</div>
<div class="t " style="left:875px;top:875.1px;font-size:16px;line-height:22px;color:#222;letter-spacing:-0.616px;">90 Days</div>
<div class="t " style="left:1030px;top:875.1px;font-size:16px;line-height:22px;color:#222;letter-spacing:-0.463px;">0.0 Bytes</div>
<div class="t " style="left:1589.5px;top:875.1px;font-size:16px;line-height:22px;color:#222;letter-spacing:-0.435px;">Retained</div>
<div class="t " style="left:1187px;top:875.1px;font-size:16px;line-height:22px;color:#222;">-</div>
<div class="t " style="left:1299px;top:875.1px;font-size:16px;line-height:22px;color:#222;">-</div>
<div class="t " style="left:1460px;top:875.1px;font-size:16px;line-height:22px;color:#222;letter-spacing:-0.463px;">0.0 Bytes</div>
<div class="r" style="left:360px;top:950px;width:22px;height:22px;background:#fff;border:1px solid #c4c4c4;"></div>
<svg style="left:418.2px;top:949.9px" width="20" height="20" viewBox="0 0 20 20"><circle cx="10" cy="10" r="7.5" fill="none" stroke="#82c77f" stroke-width="2.3"/><path d="M6.6 9.9 L9 12.6 L14.4 6.8" fill="none" stroke="#7cc57a" stroke-width="2.5"/></svg>
<svg style="left:450.6px;top:951px" width="20" height="20" viewBox="0 0 20 20"><path d="M8.22 0.77 L11.78 0.77 L12.69 3.64 L12.59 3.61 L15.27 2.22 L17.78 4.73 L16.39 7.41 L16.35 7.31 L19.23 8.22 L19.23 11.78 L16.36 12.69 L16.39 12.59 L17.78 15.27 L15.27 17.78 L12.59 16.39 L12.69 16.35 L11.78 19.23 L8.22 19.23 L7.31 16.36 L7.41 16.39 L4.73 17.78 L2.22 15.27 L3.61 12.59 L3.65 12.69 L0.77 11.78 L0.77 8.22 L3.64 7.31 L3.61 7.41 L2.22 4.73 L4.73 2.22 L7.41 3.61 L7.31 3.65Z" fill="none" stroke="#8a8a9d" stroke-width="1.3" stroke-linejoin="round"/><circle cx="10" cy="10" r="3.0" fill="none" stroke="#8a8a9d" stroke-width="1.3"/></svg>
<div class="t " style="left:507.5px;top:949.1px;font-size:16px;line-height:22px;color:#2a7db8;letter-spacing:-0.269px;">Network Policy Server</div>
<div class="t " style="left:754px;top:949.1px;font-size:16px;line-height:22px;color:#222;letter-spacing:-0.431px;">1.31 MB</div>
<div class="t " style="left:875px;top:949.1px;font-size:16px;line-height:22px;color:#222;letter-spacing:-0.616px;">90 Days</div>
<div class="t " style="left:1030px;top:949.1px;font-size:16px;line-height:22px;color:#222;letter-spacing:-0.463px;">0.0 Bytes</div>
<div class="t " style="left:1589.5px;top:949.1px;font-size:16px;line-height:22px;color:#222;letter-spacing:-0.435px;">Retained</div>
<div class="t " style="left:1187px;top:949.1px;font-size:16px;line-height:22px;color:#222;">-</div>
<div class="t " style="left:1299px;top:949.1px;font-size:16px;line-height:22px;color:#222;">-</div>
<div class="t " style="left:1460px;top:949.1px;font-size:16px;line-height:22px;color:#222;letter-spacing:-0.463px;">0.0 Bytes</div>
<div class="r" style="left:360px;top:1024px;width:22px;height:22px;background:#fff;border:1px solid #c4c4c4;"></div>
<svg style="left:418.4px;top:1023.9px" width="20" height="20" viewBox="0 0 20 20"><circle cx="10" cy="10" r="7.6" fill="none" stroke="#eb6a6b" stroke-width="2.5"/><path d="M4.7 15.3 L15.3 4.7" stroke="#eb6a6b" stroke-width="2.5"/></svg>
<svg style="left:450.6px;top:1025px" width="20" height="20" viewBox="0 0 20 20"><path d="M8.22 0.77 L11.78 0.77 L12.69 3.64 L12.59 3.61 L15.27 2.22 L17.78 4.73 L16.39 7.41 L16.35 7.31 L19.23 8.22 L19.23 11.78 L16.36 12.69 L16.39 12.59 L17.78 15.27 L15.27 17.78 L12.59 16.39 L12.69 16.35 L11.78 19.23 L8.22 19.23 L7.31 16.36 L7.41 16.39 L4.73 17.78 L2.22 15.27 L3.61 12.59 L3.65 12.69 L0.77 11.78 L0.77 8.22 L3.64 7.31 L3.61 7.41 L2.22 4.73 L4.73 2.22 L7.41 3.61 L7.31 3.65Z" fill="none" stroke="#8a8a9d" stroke-width="1.3" stroke-linejoin="round"/><circle cx="10" cy="10" r="3.0" fill="none" stroke="#8a8a9d" stroke-width="1.3"/></svg>
<div class="t " style="left:507.5px;top:1023.1px;font-size:16px;line-height:22px;color:#2a7db8;letter-spacing:-0.038px;">User Modification</div>
<div class="t " style="left:754px;top:1023.1px;font-size:16px;line-height:22px;color:#222;letter-spacing:-0.431px;">1.13 MB</div>
<div class="t " style="left:875px;top:1023.1px;font-size:16px;line-height:22px;color:#222;">-</div>
<div class="t " style="left:1030px;top:1023.1px;font-size:16px;line-height:22px;color:#222;">-</div>
<div class="t " style="left:1589.5px;top:1023.1px;font-size:16px;line-height:22px;color:#222;">-</div>
<div class="t " style="left:1187px;top:1023.1px;font-size:16px;line-height:22px;color:#222;">-</div>
<div class="t " style="left:1299px;top:1023.1px;font-size:16px;line-height:22px;color:#222;">-</div>
<div class="t " style="left:1460px;top:1023.1px;font-size:16px;line-height:22px;color:#222;letter-spacing:-0.463px;">0.0 Bytes</div>
<div class="r" style="left:1189px;top:262px;width:687px;height:74px;background:#fff;border:1px solid #cfcfcf;box-shadow:0 5px 12px rgba(0,0,0,0.2);"></div>
<div class="r" style="left:1709px;top:226px;width:166px;height:39px;background:#fff;border:3.5px solid #ffc107;"></div>
<svg style="left:1727.8px;top:236.2px" width="20" height="19" viewBox="0 0 20 19"><path d="M0.6 0.6 H7 L9.5 3.4 H19.4 V18.4 H0.6Z" fill="#fff" stroke="#8b8b9d" stroke-width="1.2"/><path d="M0.6 6.8 H19.4" stroke="#8b8b9d" stroke-width="1"/><path d="M14.5 6.8 V18.4 M12.4 9 H16.6 M12.4 11.8 H16.6 M12.4 14.4 H16.6 M12.4 17 H16.6" stroke="#8b8b9d" stroke-width="1"/></svg>
<div class="t " style="left:1756.5px;top:235.6px;font-size:16px;line-height:22px;color:#333;letter-spacing:-0.319px;">Archive Folder</div>
<div class="r" style="left:1203px;top:272px;width:608px;height:55.5px;border:3.2px solid #ffc107;"></div>
<div class="t " style="left:1215px;top:288.1px;font-size:16px;line-height:22px;color:#333;letter-spacing:-0.213px;">Location</div>
<div class="r" style="left:1291px;top:282px;width:425px;height:34px;background:#fff;border:1px solid #dde5e5;"></div>
<div class="t " style="left:1306px;top:289.5px;font-size:14.5px;line-height:20px;color:#555;letter-spacing:0.087px;">&lt;INSTALLATION_FOLDER&gt;\archive</div>
<div class="r" style="left:1738px;top:283px;width:63px;height:32px;background:#70b54c;"></div>
<div class="t " style="left:1753px;top:289.1px;font-size:16px;line-height:22px;color:#fff;letter-spacing:-1.490px;">Save</div>
<svg style="left:1827.5px;top:289.4px" width="20" height="20" viewBox="0 0 20 20"><circle cx="10" cy="10" r="8" fill="none" stroke="#111" stroke-width="1.4"/><path d="M10 5.2 V11.2" stroke="#111" stroke-width="1.8"/><circle cx="10" cy="13.8" r="1.1" fill="#111"/></svg>
<div class="r" style="left:1855px;top:1043px;width:30px;height:30px;background:rgba(62,75,85,0.93);border-radius:14px 14px 8px 14px;box-shadow:0 0 5px rgba(0,0,0,0.28);"></div>
<svg style="left:1855px;top:1043px" width="30" height="30" viewBox="0 0 30 30">
<circle cx="14.2" cy="12" r="3.3" fill="#fff"/>
<path d="M9.6 14.8 C8.4 4.6 20.2 4.6 19 14.8" fill="none" stroke="#36a9e8" stroke-width="1.2"/>
<path d="M19 13 C19 16.5 16 17.2 14.4 16.6" fill="none" stroke="#36a9e8" stroke-width="1.1"/>
<path d="M7.8 21.8 C7.8 16.2 21 16.2 21 21.8 C21 24.3 7.8 24.3 7.8 21.8Z" fill="#fcc419"/></svg>
</body></html>
